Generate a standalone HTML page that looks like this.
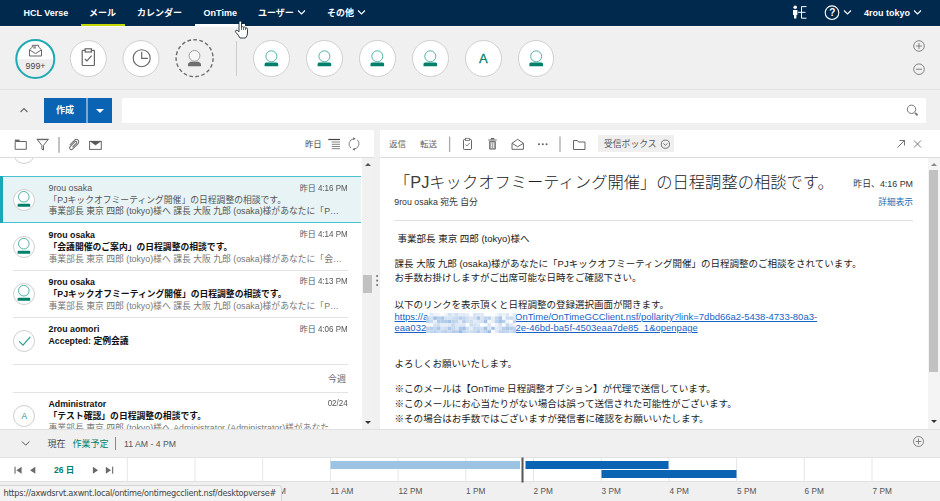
<!DOCTYPE html>
<html lang="ja">
<head>
<meta charset="utf-8">
<title>HCL Verse</title>
<style>
*{box-sizing:border-box;margin:0;padding:0}
html,body{width:940px;height:501px;overflow:hidden;background:#f0f0f0}
body{position:relative;font-family:"Liberation Sans","Noto Sans CJK JP",sans-serif;font-size:9px;color:#222;line-height:12px}
.abs{position:absolute}
.t{position:absolute;white-space:nowrap}
/* nav */
#nav{left:0;top:0;width:940px;height:26.400px;background:#01284d}
#nav .t{color:#fff;font-weight:bold;font-size:9px;line-height:12px;top:6.500px}
/* band */
#band{left:0;top:26.400px;width:940px;height:64.100px;background:#f0f0f0;border-top:1.400px solid #f9f9f9;border-bottom:1px solid #e2e2e2}
.circ{position:absolute;width:36.600px;height:36.600px;border-radius:50%;background:#fff;border:1px solid #cfcfcf;top:40.400px}
/* panels */
#left{left:0;top:130px;width:374px;height:298.700px;background:#fff;overflow:hidden}
#right{left:380px;top:130px;width:560px;height:298.700px;background:#fff;overflow:hidden}
.item{position:absolute;left:0;width:361px;height:47px}
.item .ln{position:absolute;left:13px;right:13px;bottom:0;height:1px;background:#e3e3e3}
.item .av{position:absolute;left:13.200px;top:11.700px;width:22px;height:22px;border-radius:50%;border:1px solid #cfcfcf;background:#fff}
.item .n{left:48.500px;top:4.900px;font-size:8.800px}
.item .s{left:48.500px;top:16.800px;font-size:8.800px}
.item .p{left:48.500px;top:28.800px;font-size:8.800px;color:#777}
.item .d{right:13.300px;top:5.600px;font-size:8px;color:#555}
.item.unread .n,.item.unread .s{font-weight:bold;color:#111}
.item .d .l{display:inline-block;transform:scaleY(1.17);transform-origin:50% 76%}
.item.sel .t{color:#555}
.item.sel .n{top:5.800px}.item.sel .d{top:6.500px}.item.sel .s{top:17.800px}.item.sel .p{top:29.100px}.item.sel .av{top:12.600px}
.body .t{font-size:9.500px;color:#222;left:17.500px}
.body .t.lk{color:#1a62c6;text-decoration:underline}
</style>
</head>
<body>

<!-- NAV -->
<div id="nav" class="abs">
  <span class="t" style="left:23.5px">HCL Verse</span>
  <span class="t" style="left:89px">メール</span>
  <span class="t" style="left:137px">カレンダー</span>
  <span class="t" style="left:203.600px">OnTime</span>
  <span class="t" style="left:258px">ユーザー</span>
  <span class="t" style="left:327px">その他</span>
  <span class="t" style="left:864px">4rou tokyo</span>
  <div class="abs" style="left:81px;top:23.800px;width:44px;height:2.900px;background:#c4d600"></div>
  <div class="abs" style="left:195px;top:23.800px;width:50px;height:2.900px;background:#fff"></div>
  <svg class="abs" style="left:0;top:0" width="940" height="26" viewBox="0 0 940 26" fill="none" stroke="#fff" stroke-width="1.1">
    <path d="M298 10.5l3.5 3.5 3.5-3.5"/>
    <path d="M358 10.5l3.5 3.5 3.5-3.5"/>
    <path d="M844 10.5l3.5 3.5 3.5-3.5"/>
    <path d="M914 10.5l3.5 3.5 3.5-3.5"/>
    <circle cx="832" cy="12.7" r="6.8" stroke-width="1.1"/>
    <!-- org icon -->
    <circle cx="795.2" cy="7.3" r="1.8" fill="#fff" stroke="none"/>
    <path d="M793 10h4.4v5h-1v3.6h-2.4V15h-1z" fill="#fff" stroke="none"/>
    <path d="M798 12.3h3M806.5 6.6h-5v11.6h5M801.5 12.3h4" stroke-width="1"/>
  </svg>
  <span class="t" style="left:829.200px;top:6.600px;font-size:10px;top:6.600px">?</span>
</div>

<!-- ICON BAND -->
<div id="band" class="abs"></div>
<svg class="abs" style="left:0;top:27px" width="940" height="63" viewBox="0 27 940 63" fill="none">
  <!-- mail circle -->
  <circle cx="35.300" cy="58.900" r="19" fill="#fff"/><path d="M16.300 59.300a19 19 0 0 0 38 0z" fill="#eee"/><circle cx="35.300" cy="58.900" r="19" stroke="#1fa9b3" stroke-width="2"/>
  <g stroke="#666" stroke-width="1" fill="none">
    <path d="M29.500 49.700L32.300 47.200V45.300H38.700V47.200L41.500 49.700V56H29.500Z" fill="#fff"/>
    <path d="M29.800 50L35.500 53.600L41.200 50"/>
    <rect x="33.200" y="46.200" width="2.800" height="2.400" fill="#999" stroke="none"/>
  </g>
  <!-- todo circle -->
  <circle cx="88.300" cy="58.600" r="18" fill="#fff" stroke="#cfcfcf"/>
  <g stroke="#666" stroke-width="1.200">
    <rect x="82.200" y="50.300" width="12.200" height="15.200" rx=".8"/>
    <rect x="85.200" y="48.800" width="6.200" height="3.200" fill="#fff"/>
    <path d="M84.800 59l2.200 2 4.600-5.400"/>
  </g>
  <!-- clock circle -->
  <circle cx="141" cy="58.600" r="18" fill="#fff" stroke="#cfcfcf"/>
  <g stroke="#666" stroke-width="1.150">
    <circle cx="141.700" cy="58.200" r="8.500"/>
    <path d="M141.700 51.800v6.500h6.200"/>
  </g>
  <!-- dashed -->
  <circle cx="194.600" cy="58.200" r="18.500" stroke="#6a6a6a" stroke-width="1.400" stroke-dasharray="3.700 2.400"/>
  <circle cx="194.500" cy="55.800" r="5.400" stroke="#888" stroke-width=".8" fill="#f6f6f6"/>
  <path d="M188 66.200v-2q0-.8 .8-1.200l1.500-1.200h8.400l1.500 1.200q.8 .4 .8 1.200v2z" fill="#6e6e6e"/>
  <path d="M236.5 41v35" stroke="#ccc"/>
  <!-- avatars -->
  <g id="avs">
  </g>
  <!-- plus / minus -->
  <g stroke="#777" stroke-width=".9">
    <circle cx="919" cy="46" r="5.3"/><path d="M916 46h6M919 43v6"/>
    <circle cx="919" cy="69.2" r="5.3"/><path d="M916 69.2h6"/>
  </g>
</svg>
<div class="circ" style="left:253.1px"></div>
<div class="circ" style="left:306.1px"></div>
<div class="circ" style="left:359.0px"></div>
<div class="circ" style="left:412.0px"></div>
<div class="circ" style="left:465.0px"></div>
<div class="circ" style="left:517.9px"></div>
<svg class="abs" style="left:0;top:27px" width="940" height="63" viewBox="0 27 940 63" fill="none">
  <g id="pa"><circle cx="271.400" cy="56.300" r="5.500" stroke="#2a9d8f" stroke-width=".8"/><path d="M264.600 66.300v-2.300q0-1.500 1.500-1.500h10.600q1.500 0 1.500 1.500v2.300z" fill="#00806a"/></g>
  <use href="#pa" x="53"/><use href="#pa" x="105.900"/><use href="#pa" x="158.900"/><use href="#pa" x="264.800"/>
</svg>
<span class="t" style="left:25.600px;top:60.200px;font-size:8.800px;color:#444">999+</span>
<span class="t" style="left:479px;top:51.300px;font-size:13px;line-height:15px;color:#00806a;-webkit-text-stroke:.3px #00806a">A</span>

<svg class="abs" style="left:234.200px;top:19.500px;z-index:5" width="16" height="20" viewBox="-1 -1 16 20"><path d="M4 1.200Q4 0 5.200 0Q6.500 0 6.500 1.200V6Q7.500 5.200 8.500 6.200Q9.500 5.600 10.500 6.800Q12.500 6.400 12.500 8.500V12Q12.500 15 10.500 17H5Q3.500 14 1 11.500Q-.2 10 1 9.300Q2.200 8.800 4 10.800Z" fill="#fff" stroke="#1a2a3a" stroke-width=".9"/><path d="M6.500 6v3M8.500 6.500v2.500M10.500 7v2" stroke="#1a2a3a" stroke-width=".7" fill="none"/></svg>
<!-- COMPOSE ROW -->
<svg class="abs" style="left:17.600px;top:105.500px" width="12" height="8" viewBox="0 0 12 8" fill="none" stroke="#666" stroke-width="1.1"><path d="M2.5 6l3.5-3.5L9.500 6"/></svg>
<div class="abs" style="left:44px;top:98px;width:68px;height:25px;background:#7aaad6"></div><div class="abs" style="left:44px;top:98px;width:42px;height:25px;background:#0b63b3"></div>
<div class="abs" style="left:87.500px;top:98px;width:24.500px;height:25px;background:#0b63b3"></div>
<span class="t" style="left:56px;top:104px;font-size:9px;font-weight:bold;color:#fff">作成</span>
<div class="abs" style="left:95.600px;top:108.800px;width:0;height:0;border-left:4px solid transparent;border-right:4px solid transparent;border-top:4.400px solid #fff"></div>
<div class="abs" style="left:122px;top:98px;width:804px;height:25px;background:#fff"></div>
<svg class="abs" style="left:905px;top:103px" width="16" height="16" viewBox="0 0 16 16" fill="none" stroke="#777" stroke-width="1"><circle cx="6.500" cy="6.300" r="4.200"/><path d="M10 9.800l2.600 2.600" stroke-width="1.800"/></svg>

<!-- LEFT PANEL -->
<div id="left" class="abs">
  <div class="abs" style="left:0;top:27px;width:374px;height:1px;background:#dcdcdc;z-index:2"></div>
  <svg class="abs" style="left:0;top:0" width="374" height="28" viewBox="0 0 374 28" fill="none" stroke="#666" stroke-width="1">
    <path d="M15.200 11.500H26.300V19.300H15.200Z"/><path d="M14.800 10.300h4.800" stroke-width="1.400"/>
    <path d="M37.300 9.600h10.800l-4.600 5.800v4.600l-1.600-.800v-3.800z" /><path d="M36.800 9.400h11.800" stroke-width="1.300"/>
    <path d="M59 7v15.700" stroke="#999" stroke-width="1.200"/>
    <g transform="translate(73.600 14.600) rotate(-45) scale(.87)"><path d="M-3.500 -2.800H4.500A2.800 2.800 0 0 1 4.500 2.800H-4.500A2 2 0 0 1 -4.500 -1.200H3.500A1.200 1.200 0 0 1 3.500 1.200H-3" stroke-width="1.100"/></g>
    <rect x="89.600" y="11.400" width="11.700" height="8"/><path d="M90.500 11.400l5 3.600 5-3.600z" fill="#555" stroke="#555" stroke-width=".6"/>
    <path d="M328.300 9.500h11.700" stroke="#444" stroke-width="1.200"/><path d="M331.700 12h8.300M331.700 14.300h8.300M331.700 16.500h8.300M331.700 18.700h8.300" stroke-width=".9" stroke="#777"/>
    <path d="M350.800 18a5.300 5.300 0 0 1 2.800-9.200M357.200 9.800a5.300 5.300 0 0 1-2.800 9.200" stroke-width=".9" stroke="#777"/>
    <path d="M353.200 7.200l2.400 1.500-2.400 1.500zM354.800 20.700l-2.400-1.500 2.400-1.500z" fill="#666" stroke="none"/>
  </svg>
  <span class="t" style="left:305px;top:8.200px;font-size:8.400px;color:#444">昨日</span>
  <!-- partial item -->
  <div class="abs" style="left:13.200px;top:12px;width:22px;height:22px;border-radius:50%;border:1px solid #cfcfcf;clip-path:inset(16px 0 0 0)"></div>
  <!-- scrollbar -->
  <div class="abs" style="left:361.500px;top:28px;width:12.500px;height:271px;background:#f1f1f1"></div>
  <div class="abs" style="left:364.600px;top:33px;border-left:3px solid transparent;border-right:3px solid transparent;border-bottom:3.500px solid #555"></div>
  <div class="abs" style="left:364.600px;top:291.200px;border-left:3px solid transparent;border-right:3px solid transparent;border-top:3.500px solid #333"></div>
  <div class="abs" style="left:363px;top:144.900px;width:9px;height:18px;background:#c1c1c1"></div>

  <div class="item sel" style="top:46.200px;height:47.100px;background:#e7f3f4">
    <div class="abs" style="left:0;top:0;width:361px;height:1.200px;background:#48c2ce"></div>
    <div class="abs" style="left:0;bottom:0;width:361px;height:1.200px;background:#48c2ce"></div>
    <div class="abs" style="left:0;top:0;width:2.700px;height:47px;background:#1aa8b5"></div>
    <div class="av"></div>
    <span class="t n">9rou osaka</span>
    <span class="t s">「PJキックオフミーティング開催」の日程調整の相談です。</span>
    <span class="t p">事業部長 東京 四郎 (tokyo)様へ 課長 大阪 九郎 (osaka)様があなたに「P…</span>
    <span class="t d">昨日 <span class="l">4:16 PM</span></span>
  </div>
  <div class="item unread" style="top:93.900px">
    <div class="av"></div>
    <span class="t n">9rou osaka</span>
    <span class="t s">「会議開催のご案内」の日程調整の相談です。</span>
    <span class="t p">事業部長 東京 四郎 (tokyo)様へ 課長 大阪 九郎 (osaka)様があなたに「会…</span>
    <span class="t d">昨日 <span class="l">4:14 PM</span></span>
    <div class="ln"></div>
  </div>
  <div class="item unread" style="top:140.900px">
    <div class="av"></div>
    <span class="t n">9rou osaka</span>
    <span class="t s">「PJキックオフミーティング開催」の日程調整の相談です。</span>
    <span class="t p">事業部長 東京 四郎 (tokyo)様へ 課長 大阪 九郎 (osaka)様があなたに「P…</span>
    <span class="t d">昨日 <span class="l">4:13 PM</span></span>
    <div class="ln"></div>
  </div>
  <div class="item unread" style="top:188.300px;height:46.700px">
    <div class="av"></div>
    <span class="t n">2rou aomori</span>
    <span class="t s">Accepted: 定例会議</span>
    <span class="t d">昨日 <span class="l">4:06 PM</span></span>
    <div class="ln"></div>
  </div>
  <div class="item" style="top:234.500px;height:28.300px">
    <span class="t" style="right:15px;top:8px;font-size:9px;color:#666">今週</span>
    <div class="ln"></div>
  </div>
  <div class="item unread" style="top:262.800px">
    <div class="av" style="top:12.700px"></div>
    <span class="t" style="left:21.500px;top:18.400px;font-size:8.400px;line-height:10px;color:#1f937f;font-weight:normal">A</span>
    <span class="t n">Administrator</span>
    <span class="t s">「テスト確認」の日程調整の相談です。</span>
    <span class="t p">事業部長 東京 四郎 (tokyo)様へ Administrator (Administrator)様があなた</span>
    <span class="t d"><span class="l">02/24</span></span>
  </div>
  <svg class="abs" style="left:0;top:46px" width="60" height="253" viewBox="0 0 60 253" fill="none">
    <g id="sa"><circle cx="23.800" cy="20.800" r="5.300" stroke="#2a9d8f" stroke-width=".8"/><path d="M17.600 30.800v-2q0-1 1-1h10.600q1 0 1 1v2z" fill="#00806a"/></g>
    <use href="#sa" y="46.900"/><use href="#sa" y="93.900"/>
    <path d="M19.200 165.300l3.800 3.900 7.300-8.300" stroke="#2a9d8f" stroke-width="1.200"/>
  </svg>
</div>
<svg class="abs" style="left:374px;top:270px" width="6" height="20" viewBox="0 0 6 20" fill="#666"><rect x="2.300" y="5.200" width="1.700" height="1.700"/><rect x="2.300" y="9.700" width="1.700" height="1.700"/><rect x="2.300" y="14.200" width="1.700" height="1.700"/></svg>

<!-- RIGHT PANEL -->
<div id="right" class="abs">
  <div class="abs" style="left:0;top:27px;width:560px;height:1px;background:#dcdcdc"></div>
  <span class="t" style="left:9px;top:8px;font-size:8.500px;color:#666">返信</span>
  <span class="t" style="left:40px;top:8px;font-size:8.500px;color:#666">転送</span>
  <div class="abs" style="left:218.300px;top:5.200px;width:75.300px;height:17.300px;background:#efefef"></div>
  <span class="t" style="left:224px;top:8px;font-size:8.800px;color:#555">受信ボックス</span>
  <svg class="abs" style="left:0;top:0" width="560" height="28" viewBox="0 0 560 28" fill="none" stroke="#666" stroke-width="1">
    <path d="M69.600 6.500v15.500M180 6.500v15.500" stroke="#aaa" stroke-width="1.300"/>
    <rect x="83.500" y="9.500" width="8" height="10" rx=".8"/><rect x="85.500" y="8.300" width="4" height="2.200" fill="#fff" stroke-width=".8"/><path d="M85.500 14.500l1.500 1.500 2.700-3" stroke-width=".8"/>
    <path d="M108.300 10h8.400M110.800 8.600h3.400" stroke-width="1.100"/><path d="M109.600 11.500h5.800v7.600h-5.800z" fill="#aaa" stroke="#777"/><path d="M111.500 12.500v5.500M113.500 12.500v5.500" stroke-width=".6" stroke="#fff"/>
    <path d="M132 13.300l5.700-4 5.700 4v6h-11.400zM132 13.300l5.700 3.400 5.700-3.400"/>
    <circle cx="159" cy="14.200" r="1.050" fill="#666" stroke="none"/><circle cx="162.800" cy="14.200" r="1.050" fill="#666" stroke="none"/><circle cx="166.600" cy="14.200" r="1.050" fill="#666" stroke="none"/>
    <path d="M193.500 19.500v-9h4l1 1.500h6.500v7.500z"/>
    <circle cx="285.400" cy="14.200" r="4.100" stroke-width=".9"/><path d="M283.400 13.400l2 2 2-2" stroke-width=".9"/>
    <path d="M517.500 17.500l7-7M519.500 10.500h5v5" stroke-width=".9"/>
    <path d="M534 10.500l7 7M541 10.500l-7 7" stroke-width=".9"/>
  </svg>
  <!-- scrollbar -->
  <div class="abs" style="left:548px;top:28px;width:12px;height:271px;background:#f4f4f4"></div>
  <div class="abs" style="left:549.300px;top:40.300px;width:9px;height:201.700px;background:#c1c1c1"></div>
  <div class="abs" style="left:551px;top:33px;border-left:3px solid transparent;border-right:3px solid transparent;border-bottom:3.500px solid #888"></div>
  <div class="abs" style="left:551px;top:290.300px;border-left:3px solid transparent;border-right:3px solid transparent;border-top:3.500px solid #333"></div>

  <span class="t" style="left:14px;top:39.800px;font-size:16.300px;line-height:24px;color:#222;font-weight:300">「<span style="color:#3c3c3c">PJ</span>キックオフミーティング開催」の日程調整の相談です。</span>
  <span class="t" style="left:14.300px;top:65.600px;font-size:8.800px;color:#333">9rou osaka 宛先 自分</span>
  <span class="t" style="right:27px;top:48px;font-size:8.900px;color:#333">昨日、4:16 PM</span>
  <span class="t" style="right:27px;top:65.500px;font-size:8.700px;color:#1c6fb5">詳細表示</span>
  <div class="abs" style="left:14.300px;top:89.900px;width:518.700px;height:1.300px;background:#e2e2e2"></div>
  <div class="body">
    <span class="t" style="top:102.500px">事業部長 東京 四郎 (tokyo)様へ</span>
    <span class="t" style="top:128.100px;left:14.500px">課長 大阪 九郎 (osaka)様があなたに「PJキックオフミーティング開催」の日程調整のご相談をされています。</span>
    <span class="t" style="top:142.200px;left:14.500px">お手数お掛けしますがご出席可能な日時をご確認下さい。</span>
    <span class="t" style="top:169px;left:14.500px">以下のリンクを表示頂くと日程調整の登録選択画面が開きます。</span>
    <span class="t lk" style="top:180.800px;left:14.500px">https://a</span>
    <span class="t lk" style="top:180.800px;left:135px">OnTime/OnTimeGCClient.nsf/pollarity?link=7dbd66a2-5438-4733-80a3-</span>
    <span class="t lk" style="top:191.800px;left:14.500px">eaa032</span>
    <span class="t lk" style="top:191.800px;left:135.500px">2e-46bd-ba5f-4503eaa7de85_1&amp;openpage</span>
    <svg class="abs" style="left:45.500px;top:182.600px;filter:blur(.6px)" width="90.5" height="20.6" viewBox="0 0 90.5 20.6"><rect x="3.6" y="0.0" width="3.67" height="3.48" fill="#dee9f6"/><rect x="7.2" y="0.0" width="3.67" height="3.48" fill="#eff4fa"/><rect x="10.9" y="0.0" width="3.67" height="3.48" fill="#f1f5fb"/><rect x="14.5" y="0.0" width="3.67" height="3.48" fill="#ffffff"/><rect x="18.1" y="0.0" width="3.67" height="3.48" fill="#eef4fa"/><rect x="21.7" y="0.0" width="3.67" height="3.48" fill="#d0dff2"/><rect x="25.3" y="0.0" width="3.67" height="3.48" fill="#e0eaf7"/><rect x="29.0" y="0.0" width="3.67" height="3.48" fill="#d2e1f3"/><rect x="32.6" y="0.0" width="3.67" height="3.48" fill="#e4edf8"/><rect x="36.2" y="0.0" width="3.67" height="3.48" fill="#e0eaf7"/><rect x="39.8" y="0.0" width="3.67" height="3.48" fill="#e5eef8"/><rect x="43.4" y="0.0" width="3.67" height="3.48" fill="#ffffff"/><rect x="47.1" y="0.0" width="3.67" height="3.48" fill="#d6e3f4"/><rect x="50.7" y="0.0" width="3.67" height="3.48" fill="#dee9f6"/><rect x="54.3" y="0.0" width="3.67" height="3.48" fill="#dee9f6"/><rect x="57.9" y="0.0" width="3.67" height="3.48" fill="#ffffff"/><rect x="61.5" y="0.0" width="3.67" height="3.48" fill="#ffffff"/><rect x="65.2" y="0.0" width="3.67" height="3.48" fill="#fefefe"/><rect x="68.8" y="0.0" width="3.67" height="3.48" fill="#f4f8fc"/><rect x="72.4" y="0.0" width="3.67" height="3.48" fill="#e2ecf7"/><rect x="76.0" y="0.0" width="3.67" height="3.48" fill="#ebf1f9"/><rect x="79.6" y="0.0" width="3.67" height="3.48" fill="#dde8f6"/><rect x="83.3" y="0.0" width="3.67" height="3.48" fill="#f8fafd"/><rect x="86.9" y="0.0" width="3.67" height="3.48" fill="#e2ecf7"/><rect x="0.0" y="3.4" width="3.67" height="3.48" fill="#bcd2ed"/><rect x="3.6" y="3.4" width="3.67" height="3.48" fill="#d4e2f4"/><rect x="7.2" y="3.4" width="3.67" height="3.48" fill="#9dbee5"/><rect x="10.9" y="3.4" width="3.67" height="3.48" fill="#b8cfec"/><rect x="14.5" y="3.4" width="3.67" height="3.48" fill="#a9c6e9"/><rect x="18.1" y="3.4" width="3.67" height="3.48" fill="#d3e2f3"/><rect x="21.7" y="3.4" width="3.67" height="3.48" fill="#d6e3f4"/><rect x="25.3" y="3.4" width="3.67" height="3.48" fill="#cdddf2"/><rect x="29.0" y="3.4" width="3.67" height="3.48" fill="#c7daf0"/><rect x="32.6" y="3.4" width="3.67" height="3.48" fill="#b6ceec"/><rect x="36.2" y="3.4" width="3.67" height="3.48" fill="#bfd4ee"/><rect x="39.8" y="3.4" width="3.67" height="3.48" fill="#cfdff2"/><rect x="43.4" y="3.4" width="3.67" height="3.48" fill="#dbe7f5"/><rect x="47.1" y="3.4" width="3.67" height="3.48" fill="#d1e0f3"/><rect x="50.7" y="3.4" width="3.67" height="3.48" fill="#a9c5e8"/><rect x="54.3" y="3.4" width="3.67" height="3.48" fill="#d7e4f4"/><rect x="57.9" y="3.4" width="3.67" height="3.48" fill="#bfd4ee"/><rect x="61.5" y="3.4" width="3.67" height="3.48" fill="#bbd1ed"/><rect x="65.2" y="3.4" width="3.67" height="3.48" fill="#e7eff8"/><rect x="68.8" y="3.4" width="3.67" height="3.48" fill="#c4d7ef"/><rect x="72.4" y="3.4" width="3.67" height="3.48" fill="#a7c4e8"/><rect x="76.0" y="3.4" width="3.67" height="3.48" fill="#f3f7fc"/><rect x="79.6" y="3.4" width="3.67" height="3.48" fill="#ccddf2"/><rect x="83.3" y="3.4" width="3.67" height="3.48" fill="#c7daf0"/><rect x="86.9" y="3.4" width="3.67" height="3.48" fill="#d8e5f5"/><rect x="0.0" y="6.9" width="3.67" height="3.48" fill="#b9d0ed"/><rect x="3.6" y="6.9" width="3.67" height="3.48" fill="#c6d9f0"/><rect x="7.2" y="6.9" width="3.67" height="3.48" fill="#e7eff8"/><rect x="10.9" y="6.9" width="3.67" height="3.48" fill="#b2cbeb"/><rect x="14.5" y="6.9" width="3.67" height="3.48" fill="#b5ceec"/><rect x="18.1" y="6.9" width="3.67" height="3.48" fill="#afc9ea"/><rect x="21.7" y="6.9" width="3.67" height="3.48" fill="#a3c2e7"/><rect x="25.3" y="6.9" width="3.67" height="3.48" fill="#bcd2ed"/><rect x="29.0" y="6.9" width="3.67" height="3.48" fill="#c2d6ef"/><rect x="32.6" y="6.9" width="3.67" height="3.48" fill="#e3ecf7"/><rect x="36.2" y="6.9" width="3.67" height="3.48" fill="#b7cfec"/><rect x="39.8" y="6.9" width="3.67" height="3.48" fill="#d3e1f3"/><rect x="43.4" y="6.9" width="3.67" height="3.48" fill="#cfdff2"/><rect x="47.1" y="6.9" width="3.67" height="3.48" fill="#e2ebf7"/><rect x="50.7" y="6.9" width="3.67" height="3.48" fill="#dbe7f5"/><rect x="54.3" y="6.9" width="3.67" height="3.48" fill="#d1e0f3"/><rect x="57.9" y="6.9" width="3.67" height="3.48" fill="#a7c4e8"/><rect x="61.5" y="6.9" width="3.67" height="3.48" fill="#f4f7fc"/><rect x="65.2" y="6.9" width="3.67" height="3.48" fill="#e6eef8"/><rect x="68.8" y="6.9" width="3.67" height="3.48" fill="#bfd4ee"/><rect x="72.4" y="6.9" width="3.67" height="3.48" fill="#a3c2e7"/><rect x="76.0" y="6.9" width="3.67" height="3.48" fill="#b7cfec"/><rect x="79.6" y="6.9" width="3.67" height="3.48" fill="#f1f5fb"/><rect x="83.3" y="6.9" width="3.67" height="3.48" fill="#ffffff"/><rect x="86.9" y="6.9" width="3.67" height="3.48" fill="#bcd2ee"/><rect x="0.0" y="10.3" width="3.67" height="3.48" fill="#fbfcfd"/><rect x="3.6" y="10.3" width="3.67" height="3.48" fill="#ffffff"/><rect x="7.2" y="10.3" width="3.67" height="3.48" fill="#d3e1f3"/><rect x="10.9" y="10.3" width="3.67" height="3.48" fill="#d0e0f3"/><rect x="14.5" y="10.3" width="3.67" height="3.48" fill="#e6eef8"/><rect x="18.1" y="10.3" width="3.67" height="3.48" fill="#e4edf8"/><rect x="21.7" y="10.3" width="3.67" height="3.48" fill="#dfeaf7"/><rect x="25.3" y="10.3" width="3.67" height="3.48" fill="#c5d8f0"/><rect x="29.0" y="10.3" width="3.67" height="3.48" fill="#dbe7f5"/><rect x="32.6" y="10.3" width="3.67" height="3.48" fill="#dee9f6"/><rect x="36.2" y="10.3" width="3.67" height="3.48" fill="#dde8f6"/><rect x="39.8" y="10.3" width="3.67" height="3.48" fill="#ffffff"/><rect x="43.4" y="10.3" width="3.67" height="3.48" fill="#ccddf1"/><rect x="47.1" y="10.3" width="3.67" height="3.48" fill="#d3e2f3"/><rect x="50.7" y="10.3" width="3.67" height="3.48" fill="#dde8f6"/><rect x="54.3" y="10.3" width="3.67" height="3.48" fill="#ffffff"/><rect x="57.9" y="10.3" width="3.67" height="3.48" fill="#f8fafd"/><rect x="61.5" y="10.3" width="3.67" height="3.48" fill="#d6e4f4"/><rect x="65.2" y="10.3" width="3.67" height="3.48" fill="#ffffff"/><rect x="68.8" y="10.3" width="3.67" height="3.48" fill="#eef3fa"/><rect x="72.4" y="10.3" width="3.67" height="3.48" fill="#d2e1f3"/><rect x="76.0" y="10.3" width="3.67" height="3.48" fill="#ffffff"/><rect x="79.6" y="10.3" width="3.67" height="3.48" fill="#c4d8f0"/><rect x="83.3" y="10.3" width="3.67" height="3.48" fill="#dde8f6"/><rect x="86.9" y="10.3" width="3.67" height="3.48" fill="#edf3fa"/><rect x="0.0" y="13.7" width="3.67" height="3.48" fill="#bdd3ee"/><rect x="3.6" y="13.7" width="3.67" height="3.48" fill="#b6ceec"/><rect x="7.2" y="13.7" width="3.67" height="3.48" fill="#c2d6ef"/><rect x="10.9" y="13.7" width="3.67" height="3.48" fill="#aac6e9"/><rect x="14.5" y="13.7" width="3.67" height="3.48" fill="#d4e2f4"/><rect x="18.1" y="13.7" width="3.67" height="3.48" fill="#cedef2"/><rect x="21.7" y="13.7" width="3.67" height="3.48" fill="#adc8e9"/><rect x="25.3" y="13.7" width="3.67" height="3.48" fill="#c4d8ef"/><rect x="29.0" y="13.7" width="3.67" height="3.48" fill="#d9e6f5"/><rect x="32.6" y="13.7" width="3.67" height="3.48" fill="#afc9ea"/><rect x="36.2" y="13.7" width="3.67" height="3.48" fill="#a3c1e7"/><rect x="39.8" y="13.7" width="3.67" height="3.48" fill="#cfdff2"/><rect x="43.4" y="13.7" width="3.67" height="3.48" fill="#e5edf8"/><rect x="47.1" y="13.7" width="3.67" height="3.48" fill="#c8daf0"/><rect x="50.7" y="13.7" width="3.67" height="3.48" fill="#c8daf1"/><rect x="54.3" y="13.7" width="3.67" height="3.48" fill="#ccddf1"/><rect x="57.9" y="13.7" width="3.67" height="3.48" fill="#a4c2e7"/><rect x="61.5" y="13.7" width="3.67" height="3.48" fill="#dce8f6"/><rect x="65.2" y="13.7" width="3.67" height="3.48" fill="#a8c5e8"/><rect x="68.8" y="13.7" width="3.67" height="3.48" fill="#e2ecf7"/><rect x="72.4" y="13.7" width="3.67" height="3.48" fill="#d7e4f4"/><rect x="76.0" y="13.7" width="3.67" height="3.48" fill="#b6ceec"/><rect x="79.6" y="13.7" width="3.67" height="3.48" fill="#abc7e9"/><rect x="83.3" y="13.7" width="3.67" height="3.48" fill="#b1cbeb"/><rect x="86.9" y="13.7" width="3.67" height="3.48" fill="#bdd3ee"/><rect x="0.0" y="17.2" width="3.67" height="3.48" fill="#c1d6ef"/><rect x="3.6" y="17.2" width="3.67" height="3.48" fill="#c1d6ef"/><rect x="7.2" y="17.2" width="3.67" height="3.48" fill="#b7cfec"/><rect x="10.9" y="17.2" width="3.67" height="3.48" fill="#c9dbf1"/><rect x="14.5" y="17.2" width="3.67" height="3.48" fill="#bed4ee"/><rect x="18.1" y="17.2" width="3.67" height="3.48" fill="#b8cfec"/><rect x="21.7" y="17.2" width="3.67" height="3.48" fill="#c5d8f0"/><rect x="25.3" y="17.2" width="3.67" height="3.48" fill="#b3cceb"/><rect x="29.0" y="17.2" width="3.67" height="3.48" fill="#b8cfec"/><rect x="32.6" y="17.2" width="3.67" height="3.48" fill="#96b9e4"/><rect x="36.2" y="17.2" width="3.67" height="3.48" fill="#bdd3ee"/><rect x="39.8" y="17.2" width="3.67" height="3.48" fill="#cfdff2"/><rect x="43.4" y="17.2" width="3.67" height="3.48" fill="#cddef2"/><rect x="47.1" y="17.2" width="3.67" height="3.48" fill="#c5d8f0"/><rect x="50.7" y="17.2" width="3.67" height="3.48" fill="#afcaea"/><rect x="54.3" y="17.2" width="3.67" height="3.48" fill="#cdddf2"/><rect x="57.9" y="17.2" width="3.67" height="3.48" fill="#bcd2ed"/><rect x="61.5" y="17.2" width="3.67" height="3.48" fill="#9abce5"/><rect x="65.2" y="17.2" width="3.67" height="3.48" fill="#ffffff"/><rect x="68.8" y="17.2" width="3.67" height="3.48" fill="#dfe9f6"/><rect x="72.4" y="17.2" width="3.67" height="3.48" fill="#bfd4ee"/><rect x="76.0" y="17.2" width="3.67" height="3.48" fill="#bcd2ed"/><rect x="79.6" y="17.2" width="3.67" height="3.48" fill="#bfd4ee"/><rect x="83.3" y="17.2" width="3.67" height="3.48" fill="#cfdff2"/><rect x="86.9" y="17.2" width="3.67" height="3.48" fill="#b6ceec"/></svg>
    <span class="t" style="top:227.500px;left:14.500px">よろしくお願いいたします。</span>
    <span class="t" style="top:253px;left:14.500px;font-size:9.560px">※このメールは【OnTime 日程調整オプション】が代理で送信しています。</span>
    <span class="t" style="top:268px;left:14.500px;font-size:9.560px">※このメールにお心当たりがない場合は誤って送信された可能性がございます。</span>
    <span class="t" style="top:283px;left:14.500px;font-size:9.560px">※その場合はお手数ではございますが発信者に確認をお願いいたします。</span>
  </div>
</div>

<!-- BOTTOM BAR -->
<div class="abs" style="left:0;top:428.700px;width:940px;height:72.300px;background:#f0f0f0;border-top:1px solid #e0e0e0"></div>
<svg class="abs" style="left:19px;top:439px" width="14" height="9" viewBox="0 0 14 9" fill="none" stroke="#555" stroke-width="1"><path d="M3 2.500l3.700 3.700 3.700-3.700"/></svg>
<span class="t" style="left:47.500px;top:437.500px;font-size:9px;color:#444">現在</span>
<span class="t" style="left:72.500px;top:437.500px;font-size:9px;color:#00806a">作業予定</span>
<div class="abs" style="left:115px;top:437px;width:1px;height:13px;background:#888"></div>
<span class="t" style="left:124px;top:437.500px;font-size:8.700px;color:#555">11 AM - 4 PM</span>
<svg class="abs" style="left:912px;top:435px" width="14" height="14" viewBox="0 0 14 14" fill="none" stroke="#777" stroke-width=".9"><circle cx="6.500" cy="6.500" r="5"/><path d="M3.700 6.500h5.600M6.500 3.700v5.600"/></svg>

<!-- TIMELINE -->
<div class="abs" style="left:0;top:456.700px;width:940px;height:25.800px;background:#fff;border-top:1px solid #e2e2e2;border-bottom:1px solid #e0e0e0"></div>
<svg class="abs" style="left:0;top:457px" width="940" height="44" viewBox="0 457 940 44" fill="none">
  <g stroke="#e6e6e6" stroke-width="1">
    <path d="M127.3 457.500v25M195.0 457.500v25M262.7 457.500v25M330.4 457.500v25M398.1 457.500v25M465.8 457.500v25M533.5 457.500v25M601.2 457.500v25M668.9 457.500v25M736.6 457.500v25M804.3 457.500v25M872.0 457.500v25"/>
  </g>
  <rect x="330.500" y="461" width="189.500" height="8" fill="#9cc3e4"/>
  <rect x="525.500" y="461" width="143" height="8" fill="#0b63b3"/>
  <rect x="601.500" y="470" width="135" height="8" fill="#0b63b3"/>
  <rect x="521.500" y="457.500" width="2" height="25" fill="#555"/>
  <g fill="#6a6a6a">
    <rect x="14.500" y="466.700" width="1.100" height="7"/><path d="M21.600 466.700v7l-5.200-3.500z"/>
    <path d="M35.300 466.700v7l-5.200-3.500z"/>
    <path d="M92.900 466.700v7l5.200-3.500z"/>
    <path d="M105.800 466.700v7l5.200-3.500z"/><rect x="112.100" y="466.700" width="1.100" height="7"/>
  </g>
</svg>
<span class="t" style="left:54px;top:464px;font-size:8.500px;font-weight:bold;color:#00806a">26 日</span>
<div id="hours">
<span class="t" style="left:127px">8 AM</span><span class="t" style="left:194.700px">9 AM</span><span class="t" style="left:262.500px">10 AM</span><span class="t" style="left:330.500px">11 AM</span><span class="t" style="left:398.500px">12 PM</span><span class="t" style="left:466px">1 PM</span><span class="t" style="left:533.500px">2 PM</span><span class="t" style="left:601.500px">3 PM</span><span class="t" style="left:669.500px">4 PM</span><span class="t" style="left:737px">5 PM</span><span class="t" style="left:804.500px">6 PM</span><span class="t" style="left:872.500px">7 PM</span>
</div>
<style>#hours .t{top:485.800px;font-size:8.250px;color:#555}</style>

<!-- STATUS TIP -->
<div class="abs" style="left:-1px;top:485.300px;width:282.500px;height:17px;background:#f3f3f3;border:1px solid #d4d4d4;border-radius:0 3px 0 0"></div>
<span class="t" style="left:3.500px;top:488px;font-size:8.200px;line-height:11px;color:#444;font-family:'DejaVu Sans','Liberation Sans',sans-serif;letter-spacing:-.27px">https://axwdsrvt.axwnt.local/ontime/ontimegcclient.nsf/desktopverse#</span>

</body>
</html>
